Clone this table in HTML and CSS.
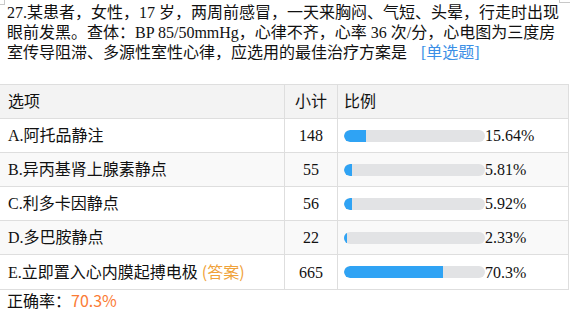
FILE: index.html
```html
<!DOCTYPE html>
<html lang="zh">
<head>
<meta charset="utf-8">
<link rel="stylesheet" href="styles.css">
</head>
<body>
<div class="page">
  <span class="mark mark-tl"></span>
  <span class="mark mark-tr"></span>
  <div class="question">27.某患者，女性，17 岁，两周前感冒，一天来胸闷、气短、头晕，行走时出现眼前发黑。查体：BP 85/50mmHg，心律不齐，心率 36 次/分，心电图为三度房室传导阻滞、多源性室性心律，应选用的最佳治疗方案是<span class="qtype">[单选题]</span></div>
  <table class="stats">
    <thead>
      <tr><th class="c-opt">选项</th><th class="c-num">小计</th><th class="c-pct">比例</th></tr>
    </thead>
    <tbody>
      <tr><td class="c-opt">A.阿托品静注</td><td class="c-num">148</td><td class="c-pct"><div class="pct"><div class="bar"><div class="fill" style="width:15.64%"></div></div><span>15.64%</span></div></td></tr>
      <tr class="alt"><td class="c-opt">B.异丙基肾上腺素静点</td><td class="c-num">55</td><td class="c-pct"><div class="pct"><div class="bar"><div class="fill" style="width:5.81%"></div></div><span>5.81%</span></div></td></tr>
      <tr><td class="c-opt">C.利多卡因静点</td><td class="c-num">56</td><td class="c-pct"><div class="pct"><div class="bar"><div class="fill" style="width:5.92%"></div></div><span>5.92%</span></div></td></tr>
      <tr class="alt"><td class="c-opt">D.多巴胺静点</td><td class="c-num">22</td><td class="c-pct"><div class="pct"><div class="bar"><div class="fill" style="width:2.33%"></div></div><span>2.33%</span></div></td></tr>
      <tr><td class="c-opt">E.立即置入心内膜起搏电极 <span class="answer">(答案)</span></td><td class="c-num">665</td><td class="c-pct"><div class="pct"><div class="bar"><div class="fill" style="width:70.3%"></div></div><span>70.3%</span></div></td></tr>
    </tbody>
  </table>
  <div class="rate">正确率：<span class="rate-val">70.3%</span></div>
</div>
</body>
</html>
```

FILE: styles.css
```css
html, body {
  margin: 0;
  padding: 0;
  background: #fff;
}
body {
  font-family: "Liberation Serif", "Noto Sans CJK SC", serif;
  font-size: 16px;
  color: #111;
  width: 570px;
  height: 317px;
  overflow: hidden;
}
.page {
  position: relative;
}
.mark {
  position: absolute;
  border: 0 solid #c8c8c8;
}
.mark-tl {
  left: -1px;
  top: -1px;
  width: 5px;
  height: 5px;
  border-right-width: 1px;
  border-bottom-width: 1px;
}
.mark-tr {
  left: 559px;
  top: -1px;
  width: 12px;
  height: 3px;
  border-left-width: 1px;
  border-bottom-width: 1px;
}
.question {
  padding: 3px 10px 0 7px;
  line-height: 20px;
  margin-bottom: 21px;
}
.qtype {
  color: #3b8fe6;
  margin-left: 14px;
}
.stats {
  border-collapse: collapse;
  width: 570px;
  margin-left: -1px;
  table-layout: fixed;
}
.stats th, .stats td {
  border: 1px solid #dedede;
  padding: 7px 6px;
  line-height: 19px;
  font-weight: normal;
  text-align: left;
  white-space: nowrap;
}
.stats thead tr {
  background: #f3f3f3;
}
.stats tr.alt {
  background: #f9f9f9;
}
.stats .c-opt {
  width: 270px;
  padding-left: 8px;
}
.stats .c-num {
  width: 40px;
  text-align: center;
}
.stats .c-pct {
  width: auto;
}
.pct {
  display: flex;
  align-items: center;
}
.bar {
  width: 141px;
  height: 12px;
  border-radius: 6px;
  background: #e2e3e5;
  overflow: hidden;
  flex: none;
}
.fill {
  height: 100%;
  background: #2fa3f4;
  border-radius: 6px 0 0 6px;
}
.answer {
  color: #f0a23a;
  font-family: "Noto Sans CJK SC", sans-serif;
}
.rate {
  padding-left: 7px;
  line-height: 20px;
}
.rate-val {
  color: #fb7c35;
  font-family: "Noto Sans CJK SC", sans-serif;
}
```
